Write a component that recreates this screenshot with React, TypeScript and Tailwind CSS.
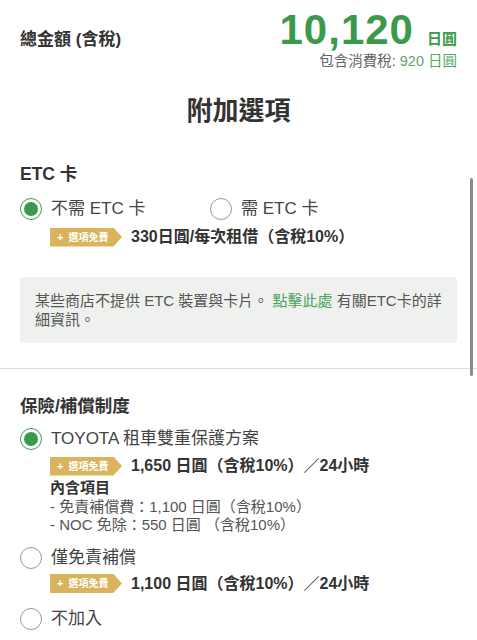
import React from "react";

const font = "font-['Liberation_Sans','Noto_Sans_CJK_TC',sans-serif]";

function Radio({ checked }: { checked?: boolean }) {
  return (
    <span
      className={`flex h-[22px] w-[22px] shrink-0 items-center justify-center rounded-full border-[1.5px] ${
        checked ? "border-[#3b9a4a]" : "border-[#9a9a9a]"
      }`}
    >
      {checked && <span className="h-[14px] w-[14px] rounded-full bg-[#3b9a4a]" />}
    </span>
  );
}

function Badge() {
  return (
    <span className="flex h-[19px] w-[72px] shrink-0 items-center bg-[#d9b45c] pl-[7px] text-[10px] font-bold text-white [clip-path:polygon(0_0,88%_0,100%_50%,88%_100%,0_100%)]">
      <span className="mr-[5px] text-[11px]">+</span>選項免費
    </span>
  );
}

function PriceRow({ text, className = "" }: { text: string; className?: string }) {
  return (
    <div className={`flex items-center pl-[30px] ${className}`}>
      <Badge />
      <span className="ml-[9px] text-[16px] font-bold leading-[20px] text-[#333]">{text}</span>
    </div>
  );
}

function Option({ label, checked, className = "" }: { label: string; checked?: boolean; className?: string }) {
  return (
    <div className={`flex h-[24px] items-center gap-[9px] ${className}`}>
      <Radio checked={checked} />
      <span className="text-[17px] leading-[24px] text-[#444]">{label}</span>
    </div>
  );
}

export default function App() {
  return (
    <div className={`relative min-h-screen overflow-hidden bg-white ${font}`}>
      {/* 總金額 */}
      <header className="flex items-center justify-between px-[20px] pt-[9px]">
        <span className="text-[17px] font-bold text-[#333]">總金額 (含稅)</span>
        <div className="flex flex-col items-end">
          <div className="flex items-baseline text-[#3b9a4a]">
            <span className="text-[42px] font-bold leading-[42px] tracking-[1px]">10,120</span>
            <span className="ml-[13px] text-[15px] font-bold">日圓</span>
          </div>
          <div className="mt-[1px] text-[14.5px] leading-[19px] text-[#666]">
            包含消費稅: <span className="text-[#5aa867]">920 日圓</span>
          </div>
        </div>
      </header>

      <h1 className="mt-[24px] text-center text-[26px] font-bold leading-[32px] text-[#333]">附加選項</h1>

      {/* ETC */}
      <section className="px-[20px] pt-[35px]">
        <h2 className="text-[17.5px] font-semibold leading-[24px] text-[#333]">ETC 卡</h2>
        <div className="mt-[11px] flex">
          <Option label="不需 ETC 卡" checked className="w-[190px]" />
          <Option label="需 ETC 卡" />
        </div>
        <PriceRow text="330日圓/每次租借（含稅10%）" className="mt-[6px]" />
        <div className="mt-[30px] rounded-[4px] bg-[#eef1ed] px-[15px] py-[14px] text-[15px] leading-[19px] text-[#555]">
          某些商店不提供 ETC 裝置與卡片。 <span className="text-[#4aa35a]">點擊此處</span> 有關ETC卡的詳細資訊。
        </div>
      </section>

      <div className="mt-[25px] h-px bg-[#dedede]" />

      {/* 保險 */}
      <section className="px-[20px] pt-[25px]">
        <h2 className="text-[17.5px] font-semibold leading-[24px] text-[#333]">保險/補償制度</h2>
        <Option label="TOYOTA 租車雙重保護方案" checked className="mt-[9px]" />
        <PriceRow text="1,650 日圓（含稅10%）／24小時" className="mt-[5px]" />
        <div className="mt-[3px] pl-[30px] text-[15px] leading-[18.5px] text-[#555]">
          <div className="font-bold text-[#333]">內含項目</div>
          <div>- 免責補償費：1,100 日圓（含稅10%）</div>
          <div>- NOC 免除：550 日圓 （含稅10%）</div>
        </div>
        <Option label="僅免責補償" className="mt-[11px]" />
        <PriceRow text="1,100 日圓（含稅10%）／24小時" className="mt-[4px]" />
        <Option label="不加入" className="mt-[13px]" />
      </section>

      {/* scroll indicator */}
      <div className="absolute right-[4px] top-[178px] h-[198px] w-[3px] rounded-full bg-[#8a8a8a]" />
    </div>
  );
}
